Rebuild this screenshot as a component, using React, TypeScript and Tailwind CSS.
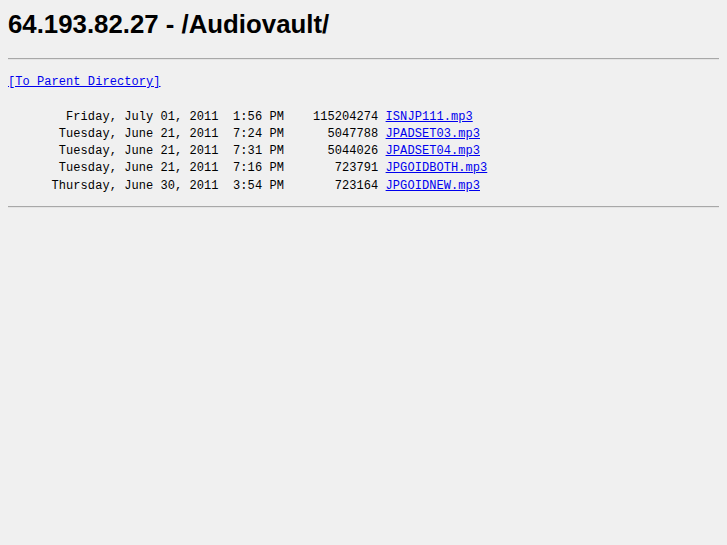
import React from "react";

const rows = [
  { date: "Friday, July 01, 2011", time: "1:56 PM", size: "115204274", name: "ISNJP111.mp3" },
  { date: "Tuesday, June 21, 2011", time: "7:24 PM", size: "5047788", name: "JPADSET03.mp3" },
  { date: "Tuesday, June 21, 2011", time: "7:31 PM", size: "5044026", name: "JPADSET04.mp3" },
  { date: "Tuesday, June 21, 2011", time: "7:16 PM", size: "723791", name: "JPGOIDBOTH.mp3" },
  { date: "Thursday, June 30, 2011", time: "3:54 PM", size: "723164", name: "JPGOIDNEW.mp3" },
];

export default function App() {
  return (
    <div className="min-h-[545px] bg-[#f0f0f0] px-2 pt-[10px] text-black">
      <h1 className="m-0 text-[25.8px] leading-[29px] font-bold font-['Liberation_Sans',Arial,sans-serif]">
        64.193.82.27 - /Audiovault/
      </h1>
      <div className="mt-[19px] h-[2px] border-t border-t-[#a8a8a8] border-b border-b-[#e4e4e4]" />
      <pre className="m-0 mt-[14px] font-['Liberation_Mono','Courier_New',monospace] text-[12px] leading-[17.25px] tracking-[0.06px]">
        <a href="#" className="text-[#0000ee] underline">[To Parent Directory]</a>
        {"\n\n"}
        {rows.map((r, i) => (
          <React.Fragment key={i}>
            {r.date.padStart(29, " ") + "  " + r.time + r.size.padStart(13, " ") + " "}
            <a href="#" className="text-[#0000ee] underline">{r.name}</a>
            {i < rows.length - 1 ? "\n" : ""}
          </React.Fragment>
        ))}
      </pre>
      <div className="mt-[11px] h-[2px] border-t border-t-[#a8a8a8] border-b border-b-[#e4e4e4]" />
    </div>
  );
}
